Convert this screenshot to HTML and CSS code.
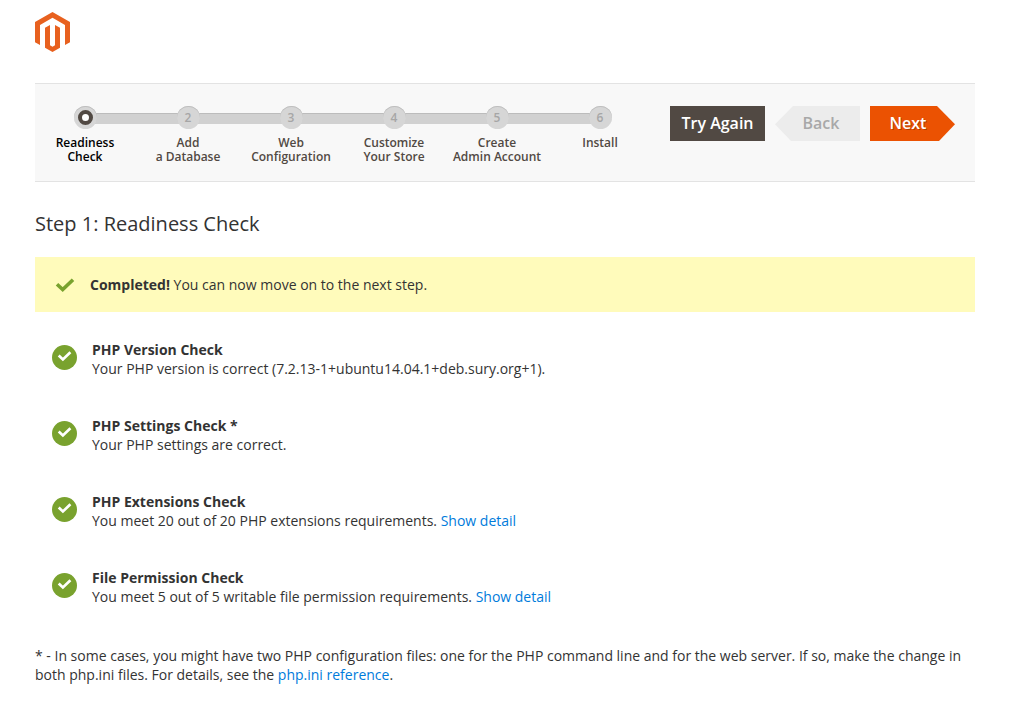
FILE: index.html
```html
<!DOCTYPE html>
<html lang="en">
<head>
    <meta charset="UTF-8">
    <meta name="viewport" content="width=device-width, initial-scale=1.0">
    <title>Magento Setup - Readiness Check</title>
    <link rel="stylesheet" href="styles.css">
</head>
<body>
    <div class="page">
        <header class="header">
            <svg class="logo" viewBox="0 0 35 40" role="img" aria-label="Magento">
                <path fill="#e8611f" d="M17.5 0 35 10v20.200l-5 2.800V12.900L17.500 5.800 5 12.900V33L0 30.200V10z"/>
                <path fill="#e8611f" d="M10 15.800l5-2.900v20.300l2.500 1.500 2.500-1.500V12.900l5 2.900V35.800l-7.500 4.200-7.500-4.200z"/>
            </svg>
        </header>

        <nav class="nav-bar">
            <ol class="steps">
                <li class="step active"><span class="dot"></span><span class="label">Readiness<br>Check</span></li>
                <li class="step"><span class="dot">2</span><span class="label">Add<br>a Database</span></li>
                <li class="step"><span class="dot">3</span><span class="label">Web<br>Configuration</span></li>
                <li class="step"><span class="dot">4</span><span class="label">Customize<br>Your Store</span></li>
                <li class="step"><span class="dot">5</span><span class="label">Create<br>Admin Account</span></li>
                <li class="step"><span class="dot">6</span><span class="label">Install</span></li>
            </ol>
            <div class="actions">
                <button type="button" class="btn btn-retry">Try Again</button>
                <button type="button" class="btn btn-prev" disabled>Back</button>
                <button type="button" class="btn btn-next">Next</button>
            </div>
        </nav>

        <main>
            <h1>Step 1: Readiness Check</h1>

            <div class="message">
                <svg class="message-icon" viewBox="0 0 20 14" aria-hidden="true">
                    <path fill="none" stroke="#79a22e" stroke-width="3.600" d="M2 6.200l5.700 5.300L18 1.700"/>
                </svg>
                <p><strong>Completed!</strong> You can now move on to the next step.</p>
            </div>

            <section class="check">
                <svg class="check-icon" viewBox="0 0 25 25" aria-hidden="true">
                    <circle cx="12.5" cy="12.5" r="12.5" fill="#79a22e"/>
                    <path fill="none" stroke="#fff" stroke-width="2.700" d="M6.700 10.500l4.200 4 7.500-7.200"/>
                </svg>
                <div>
                    <h2>PHP Version Check</h2>
                    <p>Your PHP version is correct (7.2.13-1+ubuntu14.04.1+deb.sury.org+1).</p>
                </div>
            </section>

            <section class="check">
                <svg class="check-icon" viewBox="0 0 25 25" aria-hidden="true">
                    <circle cx="12.5" cy="12.5" r="12.5" fill="#79a22e"/>
                    <path fill="none" stroke="#fff" stroke-width="2.700" d="M6.700 10.500l4.200 4 7.500-7.200"/>
                </svg>
                <div>
                    <h2>PHP Settings Check *</h2>
                    <p>Your PHP settings are correct.</p>
                </div>
            </section>

            <section class="check">
                <svg class="check-icon" viewBox="0 0 25 25" aria-hidden="true">
                    <circle cx="12.5" cy="12.5" r="12.5" fill="#79a22e"/>
                    <path fill="none" stroke="#fff" stroke-width="2.700" d="M6.700 10.500l4.200 4 7.500-7.200"/>
                </svg>
                <div>
                    <h2>PHP Extensions Check</h2>
                    <p>You meet 20 out of 20 PHP extensions requirements. <a href="#">Show detail</a></p>
                </div>
            </section>

            <section class="check">
                <svg class="check-icon" viewBox="0 0 25 25" aria-hidden="true">
                    <circle cx="12.5" cy="12.5" r="12.5" fill="#79a22e"/>
                    <path fill="none" stroke="#fff" stroke-width="2.700" d="M6.700 10.500l4.200 4 7.500-7.200"/>
                </svg>
                <div>
                    <h2>File Permission Check</h2>
                    <p>You meet 5 out of 5 writable file permission requirements. <a href="#">Show detail</a></p>
                </div>
            </section>

            <p class="note">* - In some cases, you might have two PHP configuration files: one for the PHP command line and for the web server. If so, make the change in both php.ini files. For details, see the <a href="#">php.ini reference</a>.</p>
        </main>
    </div>
</body>
</html>
```

FILE: styles.css
```css
* {
    box-sizing: border-box;
}
body {
    margin: 0;
    background-color: #fff;
    color: #333;
    font-family: "Open Sans", "Noto Sans", sans-serif;
    font-size: 14px;
    line-height: 19px;
}
h1, h2, p {
    margin: 0;
}
a {
    color: #007bdb;
    text-decoration: none;
}
a:hover {
    text-decoration: underline;
}
.page {
    padding: 12px 36px 24px 35px;
}

/* Header */
.header {
    height: 71px;
}
.logo {
    display: block;
    width: 35px;
    height: 40px;
}

/* Step navigation */
.nav-bar {
    display: flex;
    justify-content: space-between;
    padding: 22px 20px 17px 0;
    background-color: #f8f8f8;
    border-top: 1px solid #e3e3e3;
    border-bottom: 1px solid #e3e3e3;
}
.steps {
    display: flex;
    gap: 3px;
    margin: 0;
    padding: 0;
    list-style: none;
}
.step {
    position: relative;
    display: flex;
    flex-direction: column;
    align-items: center;
    width: 100px;
    color: #514943;
    font-size: 12px;
    font-weight: 600;
    line-height: 14px;
    text-align: center;
}
.step + .step::before {
    content: "";
    position: absolute;
    top: 7px;
    right: 50%;
    width: 103px;
    height: 10px;
    background-color: #d1d1d1;
    border-top: 1px solid #bcbcbc;
}
.dot {
    position: relative;
    z-index: 1;
    display: flex;
    align-items: center;
    justify-content: center;
    width: 23px;
    height: 23px;
    margin-bottom: 7px;
    border-radius: 50%;
    background-color: #d6d6d6;
    box-shadow: inset 0 1px 0 #bfbfbf;
    color: #a6a6a6;
}
.step.active {
    color: #000;
}
.active .dot::before {
    content: "";
    box-sizing: border-box;
    width: 15px;
    height: 15px;
    border: 4px solid #514943;
    border-radius: 50%;
    background-color: #fff;
}

/* Buttons */
.actions {
    display: flex;
    align-items: flex-start;
    gap: 10px;
}
.btn {
    height: 35px;
    padding: 0;
    border: none;
    font-family: inherit;
    font-size: 16px;
    font-weight: 600;
    line-height: 35px;
    cursor: pointer;
}
.btn-retry {
    width: 95px;
    background-color: #514943;
    color: #fff;
}
.btn-prev {
    width: 85px;
    padding-left: 7px;
    background-color: #ececec;
    color: #a8a8a8;
    clip-path: polygon(18px 0, 100% 0, 100% 100%, 16px 100%, 0 52%);
    cursor: default;
}
.btn-next {
    width: 85px;
    padding-right: 9px;
    background-color: #eb5202;
    color: #fff;
    text-shadow: 1px 1px 0 rgba(0, 0, 0, 0.25);
    clip-path: polygon(0 0, 67px 0, 100% 52%, 69px 100%, 0 100%);
}

/* Content */
h1 {
    margin: 28px 0 19px;
    font-size: 20px;
    font-weight: 400;
    line-height: 28px;
}
.message {
    display: flex;
    align-items: center;
    gap: 15px;
    padding: 18px 20px;
    margin-bottom: 28px;
    background-color: #fffbbb;
}
.message-icon {
    width: 20px;
    height: 14px;
}
.check {
    display: flex;
    gap: 15px;
    margin-bottom: 38px;
    padding-left: 17px;
}
.check-icon {
    flex: none;
    width: 25px;
    height: 25px;
    margin-top: 5px;
}
.check h2 {
    font-size: 14px;
    font-weight: 700;
    line-height: 19px;
}
.note {
    margin-top: 40px;
}
```
